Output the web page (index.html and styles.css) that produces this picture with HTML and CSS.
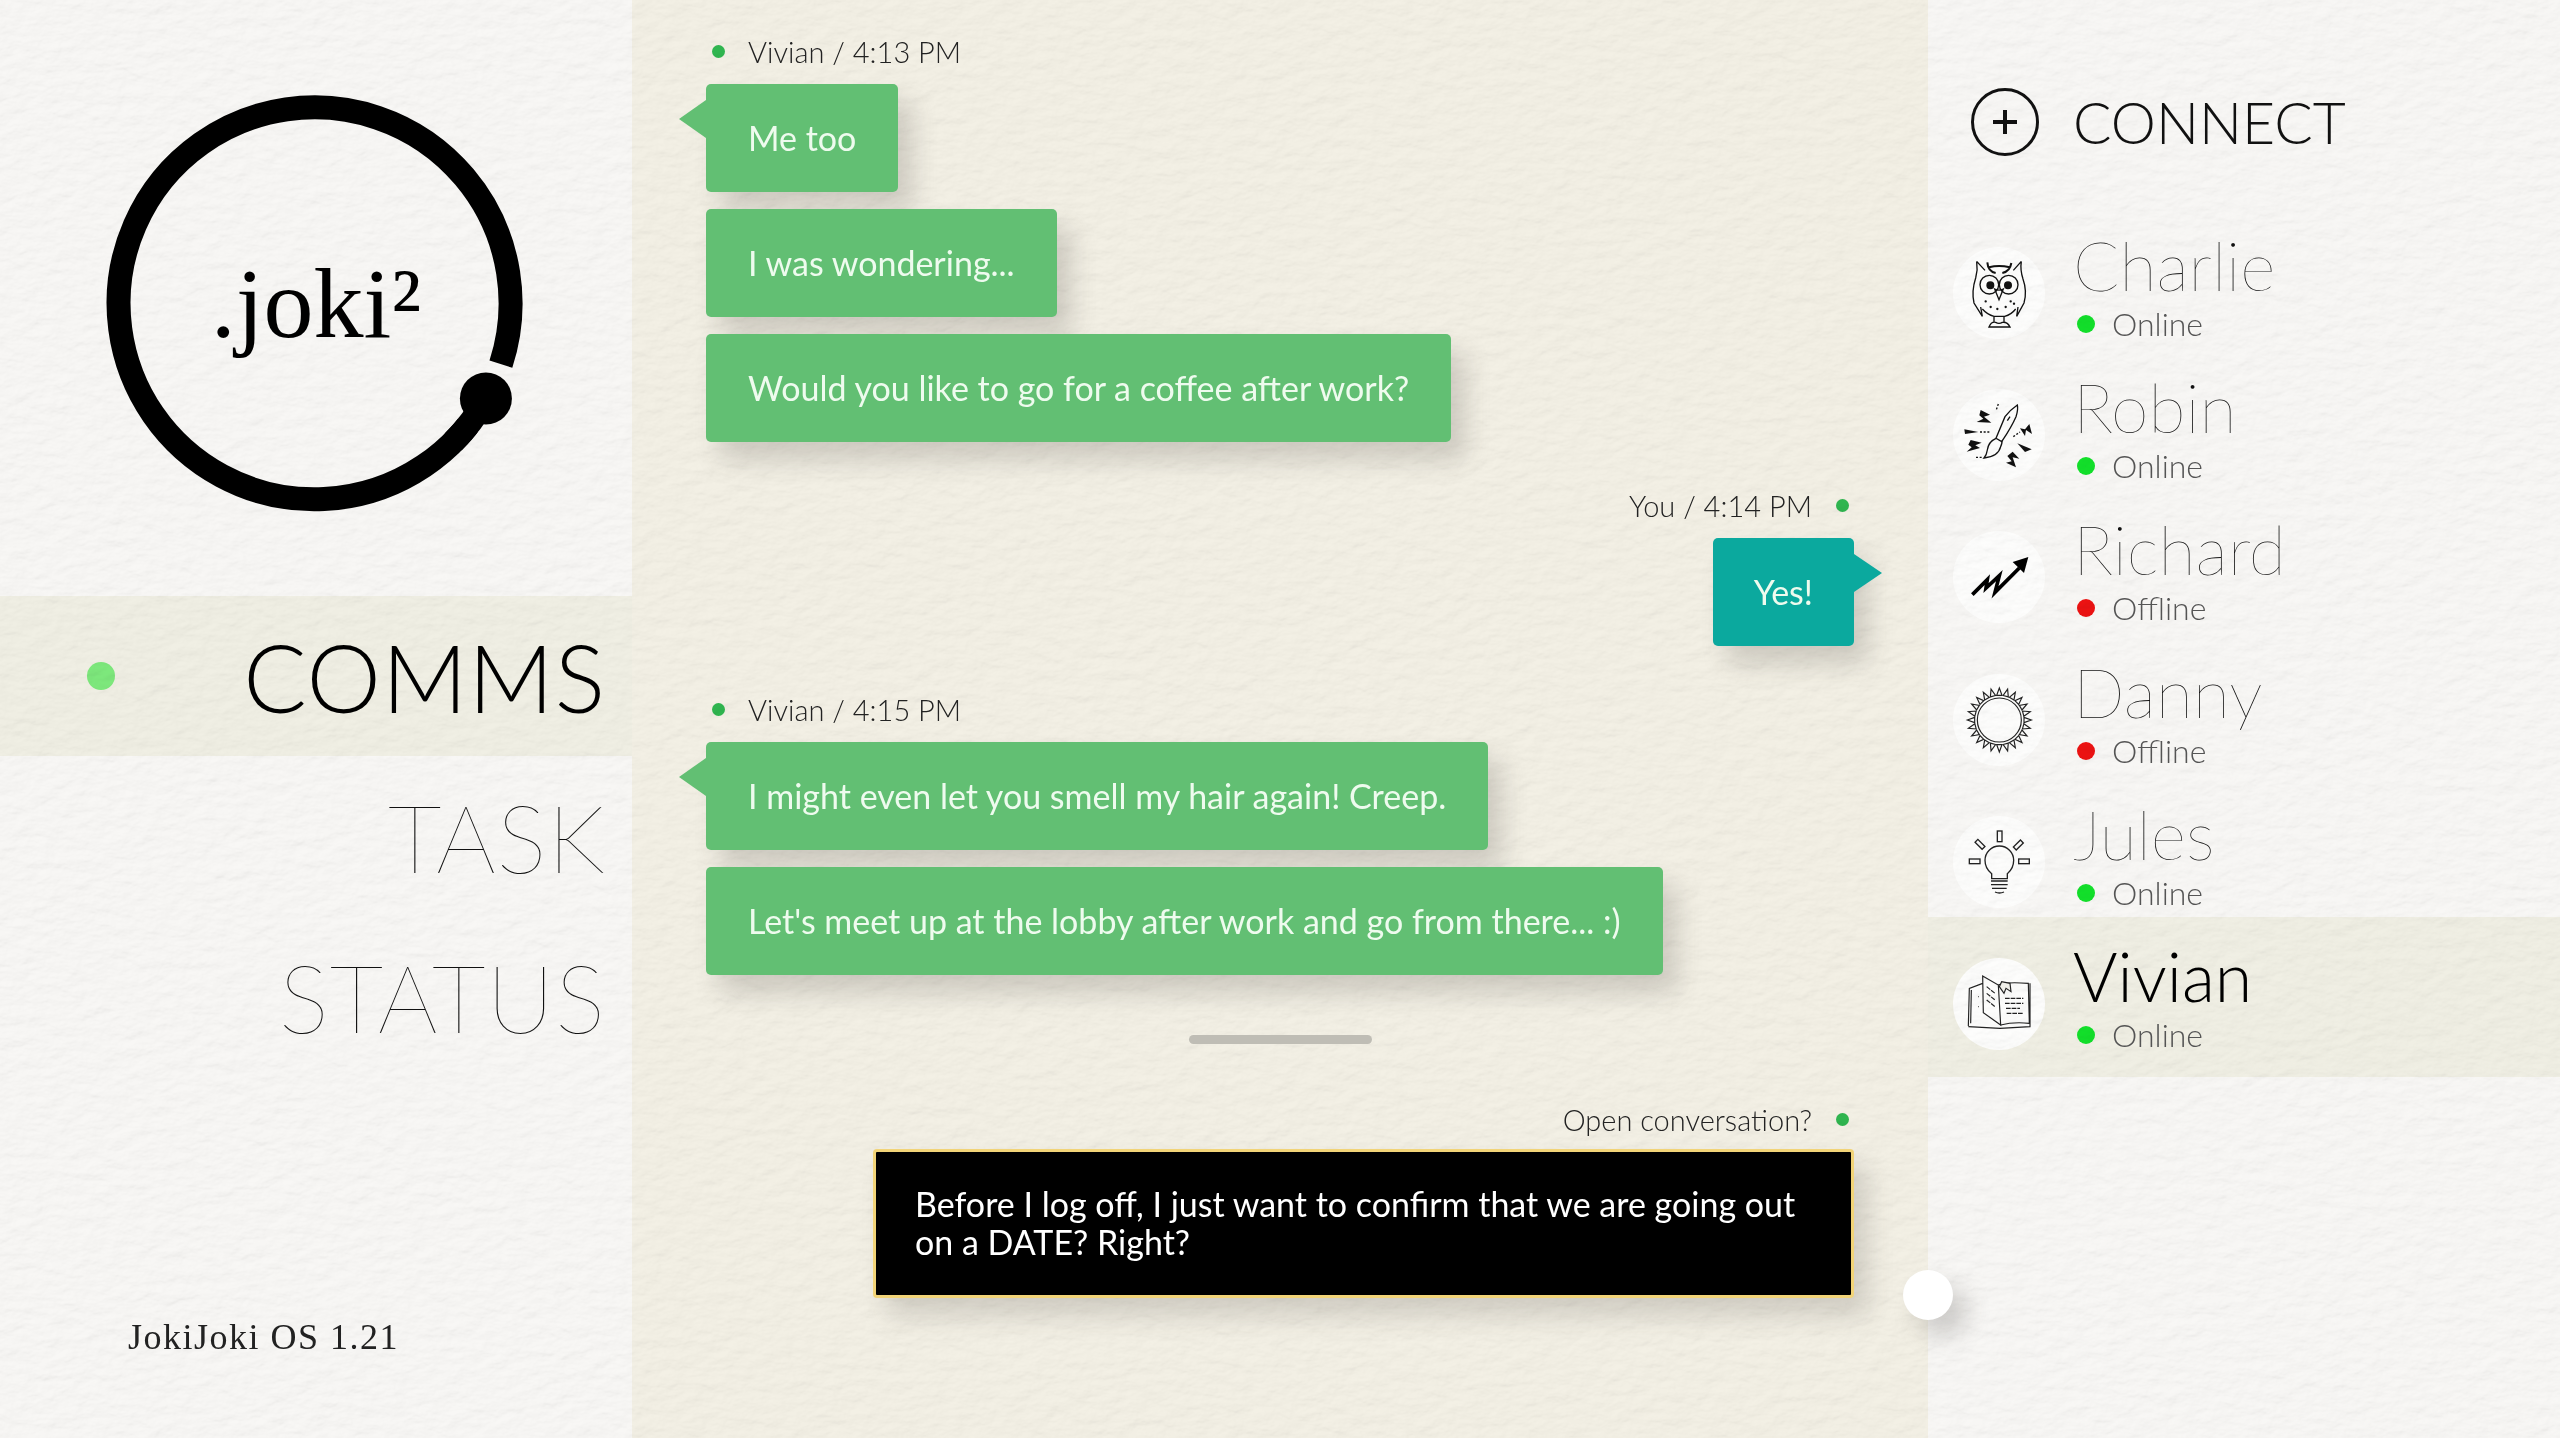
FILE: index.html
```html
<!DOCTYPE html>
<html>

<head>
	<title>JokiJoki OS</title>
	<link rel="stylesheet" href="styles.css">
</head>

<body>
	<div class="app">
		<aside class="sidebar">
			<div class="logo">
				<svg class="logo-ring" viewBox="0 0 632 596">
					<path d="M485.9 398.5A196 196 0 1 1 500.9 364.1" fill="none" stroke="#000" stroke-width="24" />
					<circle cx="485.9" cy="398.5" r="35" fill="#f8f7f5" />
					<path d="M485.9 398.5A196 196 0 0 1 453.1 442.1" fill="none" stroke="#000" stroke-width="24" />
					<circle cx="485.9" cy="398.5" r="26" />
				</svg>
				<div class="logo-text">.joki²</div>
			</div>
			<nav class="nav">
				<div class="nav-item active"><i class="nav-dot"></i><span>COMMS</span></div>
				<div class="nav-item"><span>TASK</span></div>
				<div class="nav-item"><span>STATUS</span></div>
			</nav>
			<div class="version">JokiJoki OS 1.21</div>
		</aside>

		<main class="chat">
			<div class="meta"><i class="meta-dot"></i>Vivian / 4:13 PM</div>
			<div class="bubbles">
				<div class="bubble tail">Me too</div>
				<div class="bubble">I was wondering...</div>
				<div class="bubble">Would you like to go for a coffee after work?</div>
			</div>

			<div class="meta mine">You / 4:14 PM<i class="meta-dot"></i></div>
			<div class="bubbles mine">
				<div class="bubble own tail">Yes!</div>
			</div>

			<div class="meta">
				<i class="meta-dot"></i>Vivian / 4:15 PM
			</div>
			<div class="bubbles">
				<div class="bubble tail">I might even let you smell my hair again! Creep.</div>
				<div class="bubble">Let's meet up at the lobby after work and go from there... :)</div>
			</div>

			<div class="handle"></div>

			<div class="meta mine prompt">Open conversation?<i class="meta-dot"></i></div>
			<div class="notice">Before I log off, I just want to confirm that we are going out on a DATE? Right?</div>
		</main>

		<aside class="contacts">
			<div class="connect">
				<svg class="connect-icon" viewBox="0 0 68 68">
					<circle cx="34" cy="34" r="32.5" fill="none" stroke="#111" stroke-width="3" />
					<path d="M34 22V46M22 34H46" stroke="#111" stroke-width="4" />
				</svg>
				<span>CONNECT</span>
			</div>

			<div class="contact">
				<span class="avatar">
					<svg viewBox="67 82 276 276" fill="none" stroke="#111" stroke-width="4">
						<path d="M138 125L163 152M272 125L248 152M138 125Q142 150 135 175Q122 215 130 250L155 290L150 262M272 125Q268 150 277 178Q290 215 280 250L258 290L262 262" />
						<path d="M170 128Q172 155 195 160M242 130Q238 155 215 160M175 143Q205 135 237 143" stroke-width="6" />
						<circle cx="176" cy="195" r="28" />
						<circle cx="234" cy="195" r="28" />
						<circle cx="179" cy="197" r="10" fill="#111" />
						<circle cx="232" cy="197" r="10" fill="#111" />
						<path d="M192 208L205 240L218 208Q205 215 192 208Z" />
						<path d="M155 268Q170 285 190 290H222Q242 285 255 268M190 290V308M220 290V308M175 322Q182 305 195 308Q205 314 215 308Q230 306 238 322Z" />
						<path d="M165 245h.1M180 262h.1M200 268h.1M225 262h.1M240 245h.1M250 252h.1" stroke-width="7" stroke-linecap="round" />
					</svg>
				</span>
				<div class="contact-info">
					<div class="contact-name">Charlie</div>
					<div class="contact-status"><i class="status-dot online"></i>Online</div>
				</div>
			</div>

			<div class="contact">
				<span class="avatar">
					<svg viewBox="69 507 276 276" fill="none" stroke="#111" stroke-width="4">
						<path d="M262 555Q240 570 225 590L198 655L215 665Q245 620 258 590Q265 570 262 555ZM232 602L240 590" />
						<path d="M198 655Q175 665 172 690Q170 705 162 714Q205 710 212 680Q218 668 215 662" />
						<g fill="#111" stroke="none">
							<path d="M152 570L180 584L162 590L184 608L140 606L160 596L148 586Z" />
							<path d="M103 628L145 636L105 642Z" />
							<path d="M122 660L155 668L136 676L150 684L110 695L125 682L115 674Z" />
							<path d="M248 695L268 716L248 712L258 742L228 728L245 724L232 708Z" />
							<path d="M298 612L306 642L288 630L285 648L270 625L285 628Z" />
							<path d="M262 670L305 688L285 696Z" />
						</g>
						<path d="M150 636H178M138 712H160M250 650L270 636M205 552L198 572" stroke-dasharray="6 5" />
					</svg>
				</span>
				<div class="contact-info">
					<div class="contact-name">Robin</div>
					<div class="contact-status"><i class="status-dot online"></i>Online</div>
				</div>
			</div>

			<div class="contact">
				<span class="avatar">
					<svg viewBox="69 94 276 276">
						<path d="M127 285L172 240L168 265L208 228L195 278L268 205" fill="none" stroke="#000" stroke-width="11" />
						<path d="M295 172L248 187L282 220Z" />
					</svg>
				</span>
				<div class="contact-info">
					<div class="contact-name">Richard</div>
					<div class="contact-status"><i class="status-dot offline"></i>Offline</div>
				</div>
			</div>

			<div class="contact">
				<span class="avatar">
					<svg viewBox="69 521 276 276" fill="none" stroke="#222" stroke-width="3.5">
						<defs>
							<path id="ray" d="M200 585L216 585L208 563Z" />
						</defs>
						<circle cx="208" cy="659" r="66" />
						<use href="#ray" />
						<use href="#ray" transform="rotate(15 208 659)" />
						<use href="#ray" transform="rotate(30 208 659)" />
						<use href="#ray" transform="rotate(45 208 659)" />
						<use href="#ray" transform="rotate(60 208 659)" />
						<use href="#ray" transform="rotate(75 208 659)" />
						<use href="#ray" transform="rotate(90 208 659)" />
						<use href="#ray" transform="rotate(105 208 659)" />
						<use href="#ray" transform="rotate(120 208 659)" />
						<use href="#ray" transform="rotate(135 208 659)" />
						<use href="#ray" transform="rotate(150 208 659)" />
						<use href="#ray" transform="rotate(165 208 659)" />
						<use href="#ray" transform="rotate(180 208 659)" />
						<use href="#ray" transform="rotate(195 208 659)" />
						<use href="#ray" transform="rotate(210 208 659)" />
						<use href="#ray" transform="rotate(225 208 659)" />
						<use href="#ray" transform="rotate(240 208 659)" />
						<use href="#ray" transform="rotate(255 208 659)" />
						<use href="#ray" transform="rotate(270 208 659)" />
						<use href="#ray" transform="rotate(285 208 659)" />
						<use href="#ray" transform="rotate(300 208 659)" />
						<use href="#ray" transform="rotate(315 208 659)" />
						<use href="#ray" transform="rotate(330 208 659)" />
						<use href="#ray" transform="rotate(345 208 659)" />
					</svg>
				</span>
				<div class="contact-info">
					<div class="contact-name">Danny</div>
					<div class="contact-status"><i class="status-dot offline"></i>Offline</div>
				</div>
			</div>

			<div class="contact">
				<span class="avatar">
					<svg viewBox="69 77 276 276" fill="none" stroke="#222" stroke-width="4">
						<path d="M185 265V250Q165 235 165 210A43 43 0 0 1 251 210Q251 235 232 250V265Z" />
						<path d="M183 272H233M183 283H233M186 294H230M195 305Q208 311 222 305" />
						<rect x="202" y="122" width="14" height="32" />
						<rect x="118" y="206" width="32" height="14" />
						<rect x="266" y="206" width="32" height="14" />
						<rect x="135" y="156" width="30" height="12" transform="rotate(45 150 162)" />
						<rect x="250" y="158" width="30" height="12" transform="rotate(-45 265 164)" />
					</svg>
				</span>
				<div class="contact-info">
					<div class="contact-name">Jules</div>
					<div class="contact-status"><i class="status-dot online"></i>Online</div>
				</div>
			</div>

			<div class="contact active">
				<span class="avatar">
					<svg viewBox="69 504 276 276" fill="none" stroke="#222" stroke-width="3.5">
						<path d="M115 708L118 595L158 580M122 700L124 600M158 558L205 585L212 705L160 668Z" />
						<path d="M205 585Q225 575 295 580L298 700Q250 695 212 705M115 710L210 715L300 710V580" />
						<path d="M208 590L215 575L240 580L243 605L228 595L222 610Z" fill="#f2f1eb" />
						<path d="M225 625H280M225 640H280M228 655H270M230 670H278M170 590L195 610M170 610L195 630M170 630L195 650M145 620h2M145 650h2" stroke-dasharray="14 3" />
					</svg>
				</span>
				<div class="contact-info">
					<div class="contact-name">Vivian</div>
					<div class="contact-status"><i class="status-dot online"></i>Online</div>
				</div>
			</div>
		</aside>

		<!-- paper grain over the panel backgrounds -->
		<svg class="paper" width="2560" height="1438">
			<filter id="grain" x="0" y="0" width="100%" height="100%">
				<feTurbulence type="fractalNoise" baseFrequency="0.05 0.09" numOctaves="4" seed="7" />
				<feDiffuseLighting lighting-color="#fff" surfaceScale="0.9">
					<feDistantLight azimuth="60" elevation="78" />
				</feDiffuseLighting>
			</filter>
			<rect width="2560" height="1438" filter="url(#grain)" />
		</svg>

		<div class="knob"></div>
	</div>
</body>

</html>
```

FILE: styles.css
```css
* {
	box-sizing: border-box;
	margin: 0;
	padding: 0;
}

body {
	background: #f8f7f5;
	font-family: 'Lato', 'Open Sans', sans-serif;
	overflow: hidden;
}

.app {
	position: relative;
	display: grid;
	grid-template-columns: 632px 1296px 632px;
	width: 2560px;
	height: 1438px;
	overflow: hidden;
}

/* Grain */
.paper {
	position: absolute;
	top: 0;
	left: 0;
	z-index: 1;
	mix-blend-mode: multiply;
	pointer-events: none;
}

/* Left column */
.sidebar {
	display: flex;
	flex-direction: column;
	background: #f8f7f5;
}

.logo {
	display: grid;
	height: 596px;
}

.logo-ring {
	grid-area: 1 / 1;
	width: 632px;
	height: 596px;
}

.logo-text {
	grid-area: 1 / 1;
	justify-self: center;
	margin-top: 256px;
	font-family: 'Liberation Serif', serif;
	font-size: 100px;
	line-height: 96px;
	color: #000;
}

.nav-item {
	display: flex;
	justify-content: flex-end;
	align-items: center;
	height: 160px;
	padding-right: 26px;
	font-size: 94px;
	font-weight: 100;
	letter-spacing: 1px;
	color: #111;
}

.nav-item.active {
	justify-content: space-between;
	padding-left: 87px;
	background: #f0efe4;
	font-weight: 300;
	color: #000;
}

.nav-dot {
	width: 28px;
	height: 28px;
	border-radius: 50%;
	background: #7de87c;
}

.version {
	margin-top: auto;
	padding: 0 0 80px 128px;
	font-family: 'Liberation Serif', serif;
	font-size: 36px;
	letter-spacing: 1.5px;
	color: #222;
}

/* Chat */
.chat {
	display: flex;
	flex-direction: column;
	padding: 34px 74px 0;
	background: #f3f0e5;
}

.meta {
	display: flex;
	align-items: center;
	height: 34px;
	padding-left: 6px;
	font-size: 29px;
	font-weight: 300;
	color: #222;
}

.meta-dot {
	width: 13px;
	height: 13px;
	margin-right: 23px;
	border-radius: 50%;
	background: #2fb64f;
}

.meta.mine {
	justify-content: flex-end;
	padding: 0 5px 0 0;
}

.meta.mine .meta-dot {
	margin: 0 0 0 24px;
}

.bubbles {
	display: flex;
	flex-direction: column;
	align-items: flex-start;
	gap: 17px;
	margin: 16px 0 46px;
}

.bubbles.mine {
	align-items: flex-end;
}

.bubble {
	position: relative;
	z-index: 2;
	height: 108px;
	padding: 30px 42px;
	border-radius: 5px;
	background: #62bf73;
	box-shadow: 14px 18px 26px rgba(60, 55, 50, 0.2);
	font-size: 34px;
	line-height: 48px;
	color: #eefbee;
}

.bubble.own {
	background: #0ba99e;
	padding: 30px 41px;
}

.tail::before {
	content: "";
	position: absolute;
	top: 16px;
	left: -27px;
	border-top: 19px solid transparent;
	border-bottom: 19px solid transparent;
	border-right: 27px solid #62bf73;
}

.own.tail::before {
	left: auto;
	right: -28px;
	border-right: none;
	border-left: 28px solid #0ba99e;
}

.handle {
	position: relative;
	z-index: 2;
	align-self: center;
	width: 183px;
	height: 9px;
	margin-top: 14px;
	border-radius: 5px;
	background: #bfbdb5;
}

.prompt {
	margin-top: 58px;
}

.notice {
	position: relative;
	z-index: 2;
	align-self: flex-end;
	width: 981px;
	height: 149px;
	margin-top: 13px;
	padding: 33px 39px 0;
	border: 3px solid #f2d478;
	border-radius: 4px;
	background: #000;
	box-shadow: 14px 18px 26px rgba(60, 55, 50, 0.18);
	font-size: 34px;
	line-height: 38px;
	color: #fff;
}

/* Right column */
.contacts {
	background: #f8f7f5;
}

.connect {
	display: flex;
	align-items: center;
	gap: 34px;
	height: 118px;
	padding: 0 0 0 43px;
	margin-top: 88px;
	align-items: flex-start;
	font-size: 57px;
	font-weight: 300;
	line-height: 68px;
	color: #111;
}

.connect-icon {
	width: 68px;
	height: 68px;
}

.contact {
	display: flex;
	gap: 28px;
	height: 142.2px;
	padding-left: 25px;
}

.contact.active {
	height: 160px;
	background: #f0efe4;
}

.avatar {
	flex: none;
	width: 92px;
	height: 92px;
	margin-top: 41px;
	border-radius: 50%;
	background: #fdfdfc;
}

.avatar svg {
	display: block;
	width: 92px;
	height: 92px;
}

.contact-info {
	padding-top: 23px;
}

.contact-name {
	font-size: 68px;
	font-weight: 100;
	line-height: 72px;
	color: #111;
}

.contact.active .contact-name {
	font-weight: 300;
	color: #000;
}

.contact-status {
	display: flex;
	align-items: center;
	margin-top: 3px;
	padding-left: 4px;
	font-size: 32px;
	font-weight: 300;
	line-height: 40px;
	color: #555;
}

.status-dot {
	width: 18px;
	height: 18px;
	margin-right: 17px;
	border-radius: 50%;
}

.status-dot.online {
	background: #12e02a;
}

.status-dot.offline {
	background: #ec1212;
}

/* Floating knob on the column edge */
.knob {
	position: absolute;
	top: 1270px;
	left: 1903px;
	z-index: 3;
	width: 50px;
	height: 50px;
	border-radius: 50%;
	background: #fff;
	box-shadow: 14px 16px 24px rgba(60, 55, 50, 0.22);
}
```
